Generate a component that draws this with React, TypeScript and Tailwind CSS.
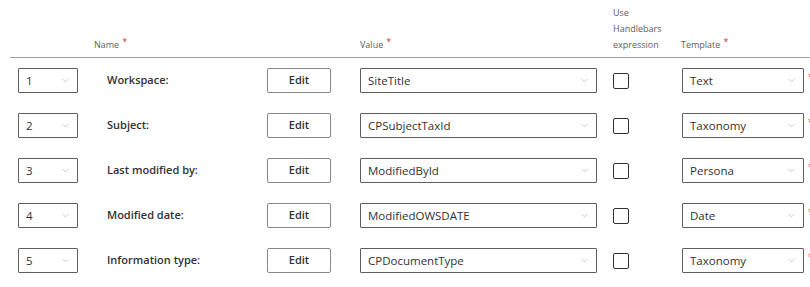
import { ChevronDown } from 'lucide-react';

const rows = [
  { n: '1', label: 'Workspace:', value: 'SiteTitle', template: 'Text' },
  { n: '2', label: 'Subject:', value: 'CPSubjectTaxId', template: 'Taxonomy' },
  { n: '3', label: 'Last modified by:', value: 'ModifiedById', template: 'Persona' },
  { n: '4', label: 'Modified date:', value: 'ModifiedOWSDATE', template: 'Date' },
  { n: '5', label: 'Information type:', value: 'CPDocumentType', template: 'Taxonomy' }
];

const Dropdown = ({ text, className = '' }: { text: string; className?: string }) => {
  return (
    <div
      className={`flex flex-row items-center justify-between h-[25px] border border-[#605e5c] rounded-[1px] pl-[7px] pr-[6px] bg-white ${className}`}
    >
      <span className="text-[11.5px] text-[#323130] leading-none">{text}</span>
      <ChevronDown className="w-[11px] h-[11px] text-[#a19f9d]" strokeWidth={1.2} />
    </div>
  );
};

const Req = () => <span className="text-[#d13438] text-[9px] ml-[3px] relative top-[-3px]">*</span>;

export default function App() {
  return (
    <div className="w-[810px] h-[287px] bg-white overflow-hidden font-['Open_Sans',sans-serif] pl-[10px]">
      <div className="flex flex-row items-end h-[58px] pb-[4px] text-[9px] leading-[16px] text-[#605e5c] border-b border-[#a19f9d]">
        <div className="w-[84px] flex-none" />
        <div className="w-[266px] flex-none">
          Name
          <Req />
        </div>
        <div className="w-[253px] flex-none">
          Value
          <Req />
        </div>
        <div className="w-[68px] flex-none">
          Use
          <br />
          Handlebars
          <br />
          expression
        </div>
        <div className="flex-none">
          Template
          <Req />
        </div>
      </div>
      {rows.map(r => (
        <div key={r.n} className="flex flex-row items-center h-[45px] pl-[8px]">
          <Dropdown text={r.n} className="w-[60px] flex-none" />
          <div className="ml-[29px] w-[160px] flex-none text-[11px] font-semibold text-[#323130]">
            {r.label}
          </div>
          <button className="w-[64px] h-[25px] flex-none border border-[#8a8886] rounded-[2px] bg-white text-[11px] font-semibold text-[#323130]">
            Edit
          </button>
          <Dropdown text={r.value} className="ml-[29px] w-[237px] flex-none" />
          <div className="ml-[16px] w-[16px] h-[16px] flex-none border border-[#323130] rounded-[2px]" />
          <Dropdown text={r.template} className="ml-[53px] w-[122px] flex-none" />
          <span className="ml-[4px] text-[#d13438] text-[9px] self-start mt-[12px]">*</span>
        </div>
      ))}
    </div>
  );
}
